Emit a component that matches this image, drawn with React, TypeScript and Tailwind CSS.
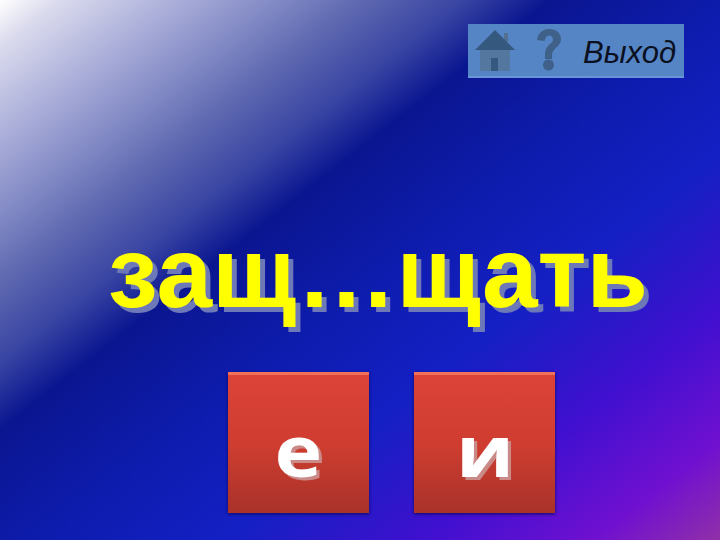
export default function App() {
  return (
    <div className="w-[720px] h-[540px] overflow-hidden flex flex-col items-start font-['Liberation_Sans',Arial,sans-serif] bg-[linear-gradient(142deg,#ffffff_0%,#dcdcee_4%,#a8acd8_13%,#8088c4_20%,#626cb2_25%,#3844a2_33%,#0a1690_39%,#0e1cae_52%,#1420c4_65%,#2a18c8_72%,#4010d0_79%,#7010d0_91%,#9030a8_100%)]">
      <div className="w-full flex justify-end pt-[24px] pr-[36px]">
        <div className="w-[216px] h-[54px] bg-[#5585c4] border-b-2 border-[#6a94d8] flex items-center pl-[6px]">
          <svg width="42" height="44" viewBox="0 0 42 44" className="shrink-0">
            <rect x="30" y="5" width="4" height="9" fill="#52708f" />
            <path d="M1 22 L21 2 L41 22 Z" fill="#34587e" />
            <path d="M6 22 H36 V43 H6 Z" fill="#54779f" />
            <rect x="17" y="30" width="7" height="13" fill="#34587e" />
          </svg>
          <svg width="24" height="42" viewBox="0 0 24 42" className="shrink-0 ml-[21px]">
            <path d="M0 11 C1 4 6 0 12 0 C19 0 24 4 24 10 C24 16 19 18 17 21 C15 23 15 25 15 30 H8 C8 24 8 20 11 17 C14 14 16 13 16 10.500 C16 8 14 6.500 12 6.500 C9.500 6.500 8 9 7.500 12 Z" fill="#3f6088" />
            <circle cx="11.500" cy="36" r="5.500" fill="#3f6088" />
          </svg>
          <span className="ml-[22px] pt-[4px] italic text-[31px] leading-none text-[#0b1020] whitespace-nowrap">Выход</span>
        </div>
      </div>
      <div className="ml-[108px] mt-[136px] h-[116px] flex items-center font-bold text-[100px] leading-none text-[#ffff00] [text-shadow:5px_5px_0_#6d78b8] whitespace-nowrap">
        защ…щать
      </div>
      <div className="ml-[228px] mt-[42px] flex gap-[45px]">
        <div className="w-[141px] h-[141px] pt-[10px] flex items-center justify-center border-t-[3px] border-[#f0705a] bg-[linear-gradient(180deg,#dc4338_0%,#cf3d30_50%,#a9322a_100%)] shadow-[0_1px_3px_#0a0a60] font-['Open_Sans',sans-serif] font-bold text-[72px] leading-none text-white [text-shadow:3px_3px_0_#c98a88]">
          <span className="inline-block scale-x-[1.12]">е</span>
        </div>
        <div className="w-[141px] h-[141px] pt-[10px] flex items-center justify-center border-t-[3px] border-[#f0705a] bg-[linear-gradient(180deg,#dc4338_0%,#cf3d30_50%,#a9322a_100%)] shadow-[0_1px_3px_#0a0a60] font-['Open_Sans',sans-serif] font-bold text-[72px] leading-none text-white [text-shadow:3px_3px_0_#c98a88]">
          <span className="inline-block scale-x-[1.12]">и</span>
        </div>
      </div>
    </div>
  );
}
